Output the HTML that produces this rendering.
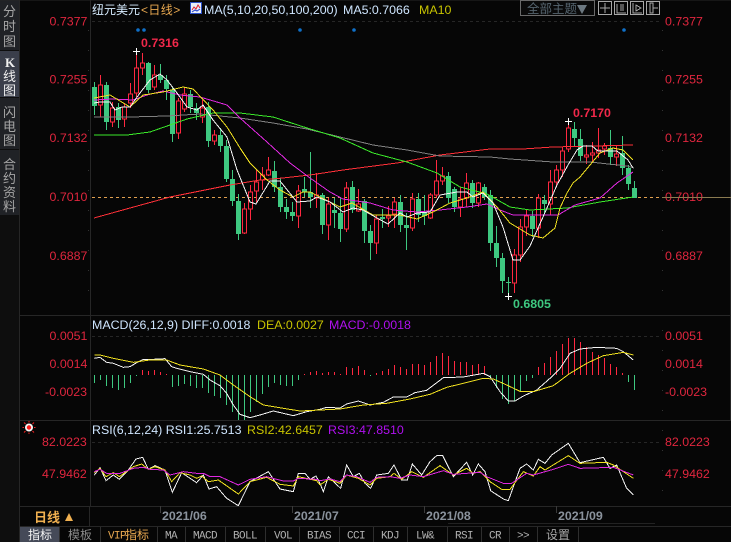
<!DOCTYPE html>
<html><head><meta charset="utf-8"><style>
html,body{margin:0;padding:0;background:#060606;width:731px;height:542px;overflow:hidden}
svg{display:block;position:absolute;left:0;top:0}
text{font-family:"Liberation Sans","Noto Sans CJK SC",sans-serif;font-size:12px}
.l{fill:#e0263e;font-size:12.4px}
.s{fill:#a6a6a6;font-size:13px}
.t{font-family:"Liberation Mono","Noto Sans CJK SC",monospace;font-size:11px;letter-spacing:-.6px;fill:#b0b0b0}
.c{font-size:12px;fill:#a8a8a8}
.d{fill:#8a929c;font-size:12.4px;font-weight:bold}
.n{vector-effect:non-scaling-stroke;fill:none;stroke-width:1;shape-rendering:crispEdges}
</style></head><body>
<svg width="731" height="542" viewBox="0 0 731 542">
<rect width="731" height="542" fill="#060606"/>
<rect x="0" y="0" width="20" height="542" fill="#0e0e0e"/>
<rect x="0" y="0" width="19" height="50" fill="#202226"/>
<rect x="0" y="51" width="19" height="46" fill="#3a3e4a"/>
<rect x="0" y="98" width="19" height="51" fill="#202226"/>
<rect x="0" y="150" width="19" height="65" fill="#202226"/>
<text class="s" x="3" y="16">分</text><text class="s" x="3" y="31">时</text><text class="s" x="3" y="46">图</text>
<text x="5" y="67" style="font-family:'Liberation Serif',serif;font-size:13px;font-weight:bold;fill:#f0f0f0">K</text>
<text class="s" x="3" y="81" style="fill:#f0f0f0">线</text><text class="s" x="3" y="95" style="fill:#f0f0f0">图</text>
<text class="s" x="3" y="117">闪</text><text class="s" x="3" y="131">电</text><text class="s" x="3" y="145">图</text>
<text class="s" x="3" y="169">合</text><text class="s" x="3" y="183">约</text><text class="s" x="3" y="197">资</text><text class="s" x="3" y="211">料</text>

<g stroke="#262626" stroke-width="1" fill="none" shape-rendering="crispEdges">
<path d="M19.5 0V542M90.5 0V506M0 0H731M20 315.5H731M20 420.5H731M20 506.5H731M20 526.5H731M89.5 506V526M730.5 90V420"/>
<path d="M160.5 506V513M292.5 506V513M424.5 506V513M556.5 506V513" stroke="#3a3a3a"/>
<path d="M448 523.5H655" stroke="#222"/>
</g>
<g stroke="#262626" stroke-dasharray="3 3" shape-rendering="crispEdges">
<path d="M92 21.5H662M92 336.5H662M92 442.5H662"/>
</g>
<g stroke="#333" stroke-dasharray="1 19" shape-rendering="crispEdges">
<path d="M662.5 30V300M662.5 330V415M662.5 430V500M88.5 30V300"/>
</g>

<!-- Left labels -->
<text class="l" x="49.5" y="25.5">0.7377</text>
<text class="l" x="49.5" y="83.5">0.7255</text>
<text class="l" x="49.5" y="142">0.7132</text>
<text class="l" x="49.5" y="201">0.7010</text>
<text class="l" x="49.5" y="260">0.6887</text>
<text class="l" x="49.5" y="340">0.0051</text>
<text class="l" x="49.5" y="368">0.0014</text>
<text class="l" x="45" y="396">-0.0023</text>
<text class="l" x="42" y="446">82.0223</text>
<text class="l" x="42" y="478">47.9462</text>
<!-- Right labels -->
<text class="l" x="665" y="25.5">0.7377</text>
<text class="l" x="665" y="83.5">0.7255</text>
<text class="l" x="665" y="142">0.7132</text>
<text class="l" x="665" y="201">0.7010</text>
<text class="l" x="665" y="260">0.6887</text>
<text class="l" x="665" y="340">0.0051</text>
<text class="l" x="665" y="368">0.0014</text>
<text class="l" x="665" y="396">-0.0023</text>
<text class="l" x="665" y="446">82.0223</text>
<text class="l" x="665" y="478">47.9462</text>

<!-- Title -->
<text x="92" y="14" style="fill:#d7ecff;font-size:12px">纽元美元</text>
<text x="141" y="14" style="fill:#e8a850;font-size:12px;letter-spacing:.4px">&lt;日线&gt;</text>
<rect x="190.5" y="2.5" width="11" height="11" fill="#e8eef8" stroke="#2a50c8"/>
<path d="M192 10l2-3 2 2 2-4 2 3" stroke="#e02030" fill="none"/><path d="M192 12l3-2 2 1 3-2" stroke="#2040d0" fill="none"/>
<text x="204" y="14" style="fill:#cfe6ff;font-size:12.4px">MA(5,10,20,50,100,200)</text>
<text x="343" y="14" style="fill:#cfe6ff;font-size:12.4px">MA5:0.7066</text>
<text x="419" y="14" style="fill:#c8c400;font-size:12.4px">MA10</text>

<!-- top right -->
<rect x="520.5" y="0.5" width="74" height="15" fill="#0a0a0a" stroke="#6a6a6a"/>
<text x="527" y="13" style="fill:#55646e;font-size:12.5px">全部主题</text>
<path d="M577 5h10l-5 9z" fill="#6c7880"/>
<g fill="none" stroke="#a8a8a8" shape-rendering="crispEdges">
<rect x="598.5" y="1.5" width="13" height="13"/><rect x="614.5" y="1.5" width="13" height="13"/><rect x="630.5" y="1.5" width="13" height="13"/><rect x="646.5" y="1.5" width="13" height="13"/>
<path d="M605 3v10M600 8h10M617 4v9h9M621 4v7M623 4v7M633 3v10h9M636 5l5 3-5 3z M650 3v10h3V3zM653 8h5"/>
</g>

<!-- 0.7010 line -->
<path d="M92 197.5H662" stroke="#e0a050" stroke-dasharray="3 3" shape-rendering="crispEdges"/>
<path d="M662 197.5H731" stroke="#8a7a50" shape-rendering="crispEdges"/>

<!-- blue dots -->
<g fill="#0f70c8"><circle cx="138" cy="30" r="1.8"/><circle cx="144" cy="30" r="1.8"/><circle cx="300" cy="30" r="1.8"/><circle cx="354" cy="30" r="1.8"/><circle cx="624" cy="30" r="1.8"/></g>

<!-- green candles -->
<g shape-rendering="crispEdges">
<path stroke="#3ec880" fill="none" d="M94.5 82V115M106.5 82V130M118.5 103V128M148.5 62V93M160.5 64V83M166.5 75V100M172.5 87V142M190.5 90V113M196.5 103V120M208.5 102V147M220.5 128V152M226.5 140V182M232.5 170V206M238.5 194V240M274.5 161V192M280.5 178V212M286.5 199V219M292.5 202V221M304.5 177V197M310.5 152V208M322.5 193V234M334.5 198V228M340.5 198V242M352.5 181V213M364.5 199V243M370.5 225V260M382.5 209V228M400.5 195V232M406.5 213V250M418.5 193V222M424.5 195V225M448.5 172V203M454.5 187V212M472.5 180V208M484.5 184V200M490.5 190V251M496.5 226V267M502.5 253V293M508.5 277V297M532.5 211V237M544.5 195V213M574.5 122V147M580.5 129V161M610.5 130V165M622.5 136V175M628.5 165V190M634.5 181V198"/>
<path fill="#3ec880" d="M92 87h5v19h-5zM104 85h5v37h-5zM116 107h5v13h-5zM146 63h5v27h-5zM158 75h5v5h-5zM164 80h5v9h-5zM170 90h5v44h-5zM188 94h5v13h-5zM194 108h5v5h-5zM206 107h5v34h-5zM218 135h5v11h-5zM224 146h5v33h-5zM230 179h5v22h-5zM236 201h5v33h-5zM272 171h5v16h-5zM278 187h5v20h-5zM284 207h5v5h-5zM290 212h5v4h-5zM302 189h5v3h-5zM308 192h5v5h-5zM320 195h5v30h-5zM332 210h5v3h-5zM338 213h5v16h-5zM350 187h5v23h-5zM362 201h5v30h-5zM368 231h5v12h-5zM380 217h5v2h-5zM398 202h5v23h-5zM404 225h5v3h-5zM416 199h5v16h-5zM422 212h5v4h-5zM446 176h5v22h-5zM452 189h5v18h-5zM470 183h5v20h-5zM482 187h5v10h-5zM488 195h5v48h-5zM494 243h5v15h-5zM500 258h5v23h-5zM506 282h5v1h-5zM530 216h5v13h-5zM542 200h5v4h-5zM572 129h5v9h-5zM578 139h5v17h-5zM608 148h5v9h-5zM620 153h5v15h-5zM626 168h5v16h-5zM632 188h5v10h-5z"/>
<!-- red candles -->
<path stroke="#ff2840" fill="none" d="M100.5 75V85M100.5 105V117M98.5 85h4V105h-4zM112.5 102V108M112.5 122V127M110.5 108h4V122h-4zM124.5 103V107M124.5 119V127M122.5 107h4V119h-4zM130.5 83V94M130.5 103V108M128.5 94h4V103h-4zM136.5 52V68M136.5 93V97M134.5 68h4V93h-4zM142.5 53V63M142.5 68V75M140.5 63h4V68h-4zM154.5 65V75M154.5 87V90M152.5 75h4V87h-4zM178.5 98V101M178.5 133V139M176.5 101h4V133h-4zM184.5 87V94M184.5 109V112M182.5 94h4V109h-4zM202.5 100V108M202.5 117V123M200.5 108h4V117h-4zM214.5 130V135M214.5 141V145M212.5 135h4V141h-4zM244.5 203V209M244.5 233V234M242.5 209h4V233h-4zM250.5 185V192M250.5 209V220M248.5 192h4V209h-4zM256.5 170V182M256.5 191V203M254.5 182h4V191h-4zM262.5 167V175M262.5 180V190M260.5 175h4V180h-4zM268.5 157V170M268.5 175V176M266.5 170h4V175h-4zM298.5 185V191M298.5 216V228M296.5 191h4V216h-4zM316.5 173V195M316.5 198V208M314.5 195h4V198h-4zM328.5 198V204M328.5 225V240M326.5 204h4V225h-4zM346.5 182V188M346.5 229V232M344.5 188h4V229h-4zM358.5 189V204M358.5 211V212M356.5 204h4V211h-4zM376.5 215V219M376.5 243V254M374.5 219h4V243h-4zM388.5 206V216M388.5 218V227M386.5 216h4V218h-4zM394.5 198V202M394.5 214V228M392.5 202h4V214h-4zM412.5 193V199M412.5 228V231M410.5 199h4V228h-4zM430.5 193V195M430.5 218V219M428.5 195h4V218h-4zM436.5 160V181M436.5 195V198M434.5 181h4V195h-4zM442.5 167V176M442.5 181V185M440.5 176h4V181h-4zM460.5 187V199M460.5 207V217M458.5 199h4V207h-4zM466.5 173V183M466.5 198V207M464.5 183h4V198h-4zM478.5 182V183M478.5 203V207M476.5 183h4V203h-4zM514.5 249V255M514.5 283V293M512.5 255h4V283h-4zM520.5 219V227M520.5 255V262M518.5 227h4V255h-4zM526.5 210V216M526.5 227V236M524.5 216h4V227h-4zM538.5 194V198M538.5 228V238M536.5 198h4V228h-4zM550.5 170V182M550.5 204V215M548.5 182h4V204h-4zM556.5 165V170M556.5 182V187M554.5 170h4V182h-4zM562.5 147V151M562.5 170V177M560.5 151h4V170h-4zM568.5 122V128M568.5 149V152M566.5 128h4V149h-4zM586.5 145V155M586.5 157V164M584.5 155h4V157h-4zM592.5 142V153M592.5 155V162M590.5 153h4V155h-4zM598.5 128V150M598.5 153V158M596.5 150h4V153h-4zM604.5 143V146M604.5 149V155M602.5 146h4V149h-4zM616.5 146V154M616.5 157V166M614.5 154h4V157h-4z"/>
<!-- crosses -->
<path stroke="#fff" d="M133 51.5h7M136.5 48v7M565 121.5h7M568.5 118v7M505 296.5h7M508.5 293v7" fill="none"/>
</g>

<!-- main MAs -->
<g>
<polyline class="n" stroke="#ff3038" points="94,218 130,208 170,197 200,191 230,185 260,180 283,178 310,175 343,170 397,163 440,155 490,149 523,149 553,147 633,145"/>
<polyline class="n" stroke="#808080" points="94,117 130,117 167,116 200,114 240,118 273,123 307,129 340,137 373,145 407,150 440,156 490,157 510,159 553,162 590,162 627,166 634,168"/>
<polyline class="n" stroke="#3be82a" points="94,135 127,135 150,132 187,119 213,113 240,113 273,117 307,128 340,138 373,153 407,162 437,173 460,187 487,194 510,207 530,210 567,208 600,202 633,197"/>
<polyline class="n" stroke="#e028e0" points="94,100 113,99 133,100 147,95 163,91 180,95 200,97 227,105 240,118 267,142 290,163 310,178 330,192 343,199 370,203 393,210 417,212 440,210 467,207 487,204 500,210 513,215 558,215 575,205 600,198 617,183 633,172"/>
<polyline class="n" stroke="#f0e020" points="94,98 110,95 130,107 143,95 163,92 183,87 193,89 213,110 227,127 240,148 250,163 257,170 267,180 280,190 293,197 303,192 310,192 320,197 340,207 352,203 373,215 400,215 417,219 433,212 450,203 467,198 483,192 497,207 510,223 530,235 543,238 555,228 560,208 567,193 573,183 580,177 600,153 613,148 623,150 633,160"/>
<polyline class="n" stroke="#f4f4f4" points="94,103 100,102 110,102 115,110 122,107 130,107 140,93 150,80 160,74 167,80 177,93 187,107 197,110 203,105 213,120 227,137 237,170 250,202 256,204 270,181 280,181 297,202 310,201 317,197 330,202 343,212 353,208 363,210 377,218 388,224 400,213 407,217 417,213 430,212 440,195 457,192 467,192 473,197 483,193 493,203 503,227 513,260 520,260 530,246 543,217 557,185 568,165 577,150 583,146 592,146 598,151 617,151 628,160 633,168"/>
</g>

<!-- annotations -->
<text x="141" y="47" style="fill:#f0284a;font-weight:bold;font-size:12.4px">0.7316</text>
<text x="573" y="117" style="fill:#f0284a;font-weight:bold;font-size:12.4px">0.7170</text>
<text x="513" y="308" style="fill:#3ec880;font-weight:bold;font-size:12.4px">0.6805</text>

<!-- MACD -->
<text x="92" y="329" style="fill:#cfe6ff;font-size:12.4px">MACD(26,12,9) DIFF:0.0018</text>
<text x="257" y="329" style="fill:#c8c400;font-size:12.4px">DEA:0.0027</text>
<text x="329" y="329" style="fill:#b010f0;font-size:12.4px">MACD:-0.0018</text>
<g shape-rendering="crispEdges" fill="none">
<path stroke="#3ec880" d="M94.5 375V383M100.5 375V380M106.5 375V386M112.5 375V388M118.5 375V390M124.5 375V388M130.5 375V383M136.5 375V376M172.5 375V387M178.5 375V386M184.5 375V384M190.5 375V386M196.5 375V388M202.5 375V388M208.5 375V393M214.5 375V396M220.5 375V398M226.5 375V405M232.5 375V412M238.5 375V420M244.5 375V420M250.5 375V412M256.5 375V402M262.5 375V394M268.5 375V387M274.5 375V383M280.5 375V385M286.5 375V386M292.5 375V386M298.5 375V380M370.5 375V376M490.5 375V378M496.5 375V388M502.5 375V399M508.5 375V404M514.5 375V401M520.5 375V391M526.5 375V381M532.5 375V378M628.5 375V382M634.5 375V390"/>
<path stroke="#ff2840" d="M142.5 375V370M148.5 375V371M154.5 375V370M160.5 375V372M166.5 375V374M304.5 375V374M310.5 375V372M316.5 375V371M322.5 375V373M328.5 375V372M334.5 375V372M340.5 375V374M346.5 375V367M352.5 375V368M358.5 375V366M364.5 375V370M376.5 375V373M382.5 375V371M388.5 375V369M394.5 375V365M400.5 375V367M406.5 375V369M412.5 375V364M418.5 375V364M424.5 375V365M430.5 375V362M436.5 375V356M442.5 375V353M448.5 375V356M454.5 375V361M460.5 375V362M466.5 375V362M472.5 375V365M478.5 375V364M484.5 375V366M538.5 375V367M544.5 375V363M550.5 375V357M556.5 375V351M562.5 375V344M568.5 375V338M574.5 375V338M580.5 375V342M586.5 375V347M592.5 375V352M598.5 375V355M604.5 375V358M610.5 375V364M616.5 375V367M622.5 375V373"/>
</g>
<g transform="translate(0,315) scale(.3333333)">
<polyline class="n" stroke="#f4f4f4" points="283,130 300,127 320,142 340,145 370,157 390,155 410,143 430,133 460,133 495,131 515,155 530,160 570,170 610,178 630,195 660,212 680,235 700,270 720,298 750,308 780,300 820,288 880,302 920,290 960,283"/>
<polyline class="n" stroke="#f0e020" points="283,120 300,120 340,130 400,142 450,135 500,135 540,150 610,162 660,180 700,210 750,245 790,270 850,280 900,288 960,285"/>
</g>
<g transform="translate(320,315) scale(.3333333)">
<polyline class="n" stroke="#f4f4f4" points="0,283 20,277 60,279 80,267 115,258 150,270 190,262 220,246 260,246 285,233 320,226 370,188 430,186 490,175 510,185 540,230 565,258 585,258 610,243 650,225 690,190 720,160 750,115 780,102 830,97 890,100 910,110 940,135"/>
<polyline class="n" stroke="#f0e020" points="0,285 60,282 130,270 200,265 270,252 330,238 380,217 430,205 490,190 520,192 560,210 600,229 640,230 700,212 750,175 800,145 850,122 910,112 940,120"/>
</g>

<!-- RSI -->
<circle cx="29" cy="427.5" r="4" fill="#f4f4f4"/><circle cx="29" cy="427.5" r="2.2" fill="#ff1818"/>
<path d="M29 421v1.500M29 432.500v1.500M22.500 427.500h1.500M34 427.500h1.500M24 422.500l1.500 1.500M32.500 431l1.500 1.500M34 422.500l-1.500 1.500M25.500 431L24 432.500" stroke="#f02020" fill="none"/>
<text x="92" y="434" style="fill:#cfe6ff;font-size:12.4px">RSI(6,12,24) RSI1:25.7513</text>
<text x="247" y="434" style="fill:#c8c400;font-size:12.4px">RSI2:42.6457</text>
<text x="328" y="434" style="fill:#b010f0;font-size:12.4px">RSI3:47.8510</text>
<g transform="translate(0,420) scale(.3333333)">
<polyline class="n" stroke="#f4f4f4" points="283,165 300,143 318,182 340,165 358,178 385,150 408,117 428,112 445,148 465,137 495,150 517,217 545,158 590,188 610,165 627,207 650,200 680,235 715,257 750,185 805,155 840,207 880,215 895,160 915,160 930,178 948,168 960,190"/>
<polyline class="n" stroke="#f0e020" points="283,158 300,145 318,170 340,158 358,170 400,140 425,132 445,148 465,140 495,150 515,185 540,158 570,165 590,175 605,168 625,185 655,180 715,222 750,185 800,172 840,193 880,198 895,170 950,182 960,195"/>
<polyline class="n" stroke="#e028e0" points="283,155 300,148 320,160 360,160 400,145 430,142 450,148 490,150 510,165 550,155 590,160 610,160 630,170 660,170 715,195 750,178 800,170 850,183 880,183 895,175 950,178 960,182"/>
</g>
<g transform="translate(320,420) scale(.3333333)">
<polyline class="n" stroke="#f4f4f4" points="0,190 10,215 25,170 62,205 80,135 100,170 118,160 135,190 152,205 170,165 205,160 222,135 245,180 262,180 277,132 305,165 330,125 350,107 368,107 400,170 440,127 458,165 475,132 495,155 512,212 550,237 565,242 600,145 620,132 640,150 655,118 675,130 695,105 745,70 780,128 850,112 870,145 890,135 920,205 940,225"/>
<polyline class="n" stroke="#f0e020" points="0,195 25,178 60,190 80,165 115,175 150,195 170,175 210,170 222,160 245,178 275,155 310,172 360,137 400,165 440,145 460,160 480,155 510,185 545,208 570,208 610,155 640,168 660,140 675,150 745,107 780,130 860,127 880,135 895,145 940,175"/>
<polyline class="n" stroke="#e028e0" points="0,182 30,177 60,185 80,165 110,170 150,187 170,172 210,170 240,175 270,165 310,170 370,152 400,163 480,157 500,170 550,190 575,190 620,160 640,165 700,148 745,133 780,145 880,142 940,165"/>
</g>

<!-- date axis -->
<text x="34" y="522" style="fill:#f0b050;font-size:13px;font-weight:bold">日线</text>
<path d="M65 521h8l-4-8z" fill="#f0b050"/>
<text class="d" x="162" y="520">2021/06</text>
<text class="d" x="294" y="520">2021/07</text>
<text class="d" x="426" y="520">2021/08</text>
<text class="d" x="558" y="520">2021/09</text>

<!-- tabs -->
<rect x="20" y="527" width="39" height="15" fill="#454a58"/>
<g stroke="#2e2e2e" shape-rendering="crispEdges"><path d="M59.5 527V542M100.5 527V542M157.5 527V542M185.5 527V542M225.5 527V542M265.5 527V542M299.5 527V542M339.5 527V542M373.5 527V542M407.5 527V542M447.5 527V542M481.5 527V542M509.5 527V542M537.5 527V542M578.5 527V542"/></g>
<text class="c" x="28" y="539" style="fill:#f4f4f4">指标</text>
<text class="c" x="68" y="539" style="fill:#8a8a8a">模板</text>
<text class="t" x="108" y="538.5" style="fill:#e8a850">VIP</text><text class="c" x="125" y="539" style="fill:#e8a850">指标</text>
<text class="t" x="165" y="538.5">MA</text>
<text class="t" x="193" y="538.5">MACD</text>
<text class="t" x="233" y="538.5">BOLL</text>
<text class="t" x="274" y="538.5">VOL</text>
<text class="t" x="307" y="538.5">BIAS</text>
<text class="t" x="347" y="538.5">CCI</text>
<text class="t" x="381" y="538.5">KDJ</text>
<text class="t" x="416" y="538.5">LW&amp;</text>
<text class="t" x="455" y="538.5">RSI</text>
<text class="t" x="489" y="538.5">CR</text>
<text class="t" x="517" y="538.5">&gt;&gt;</text>
<text class="c" x="546" y="539">设置</text>
</svg>
</body></html>
